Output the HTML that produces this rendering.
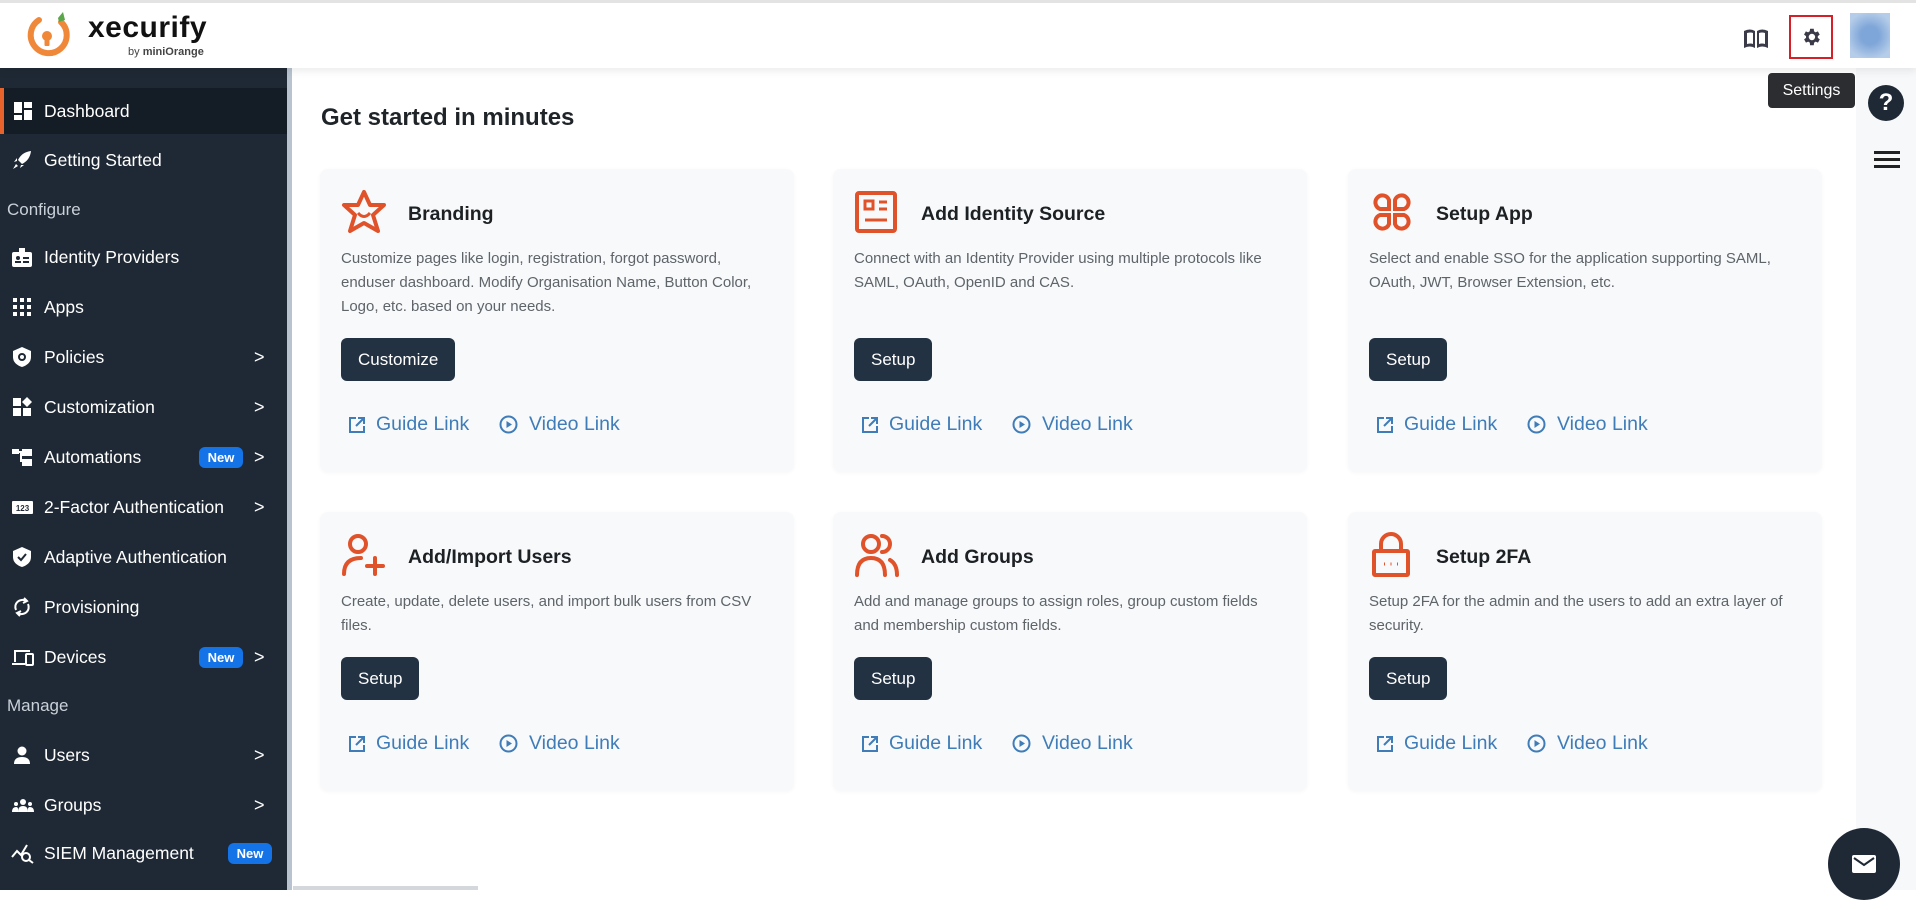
<!DOCTYPE html>
<html><head><meta charset="utf-8"><style>
*{box-sizing:border-box;margin:0;padding:0}
body{width:1916px;height:890px;overflow:hidden;background:#fff;font-family:"Liberation Sans",sans-serif;position:relative}
.top{position:absolute;left:0;top:0;width:1916px;height:68px;background:#fff;border-top:3px solid #e3e3e3;box-shadow:0 3px 8px rgba(0,0,0,.08);z-index:2}
.side{position:absolute;left:0;top:68px;width:287px;height:822px;background:#1f2935;color:#fff}
.stripe{position:absolute;left:287px;top:68px;width:5px;height:822px;background:#b8c3cf}
.item{position:absolute;left:0;width:287px;height:50px;display:flex;align-items:center;font-size:17.5px;color:#fff}
.item .ic{position:absolute;left:11px;width:22px;height:22px}
.item .t{position:absolute;left:44px}
.item .chev{position:absolute;left:254px;font-size:18px}
.sec{position:absolute;left:7px;font-size:17px;color:#c9d0d8}
.new{position:absolute;left:199px;width:44px;height:21px;background:#1473e6;border-radius:6px;font-size:13px;font-weight:bold;display:flex;align-items:center;justify-content:center}
.rail{position:absolute;left:1856px;top:68px;width:60px;height:822px;background:#f6f8fa}
h1{position:absolute;left:321px;top:104px;font-size:24px;font-weight:bold;color:#1f2428}
.card{position:absolute;width:474px;background:#f7f9fb;border-radius:8px;box-shadow:0 1px 4px rgba(0,0,0,.04)}
.card .ico{position:absolute;left:21px;top:20px;width:46px;height:46px}
.card .ti{position:absolute;left:88px;top:34px;font-size:19.5px;font-weight:bold;color:#1e2124}
.card .d{position:absolute;left:21px;top:78px;width:418px;font-size:15px;line-height:24px;color:#5f6469}
.btn{position:absolute;left:21px;height:43px;background:#233242;color:#fff;border-radius:6px;font-size:17px;display:flex;align-items:center;padding:0 17px}
.lk{position:absolute;font-size:19.5px;color:#3f7cb8;display:flex;align-items:center}
</style></head><body>
<div class="top">
 <svg style="position:absolute;left:25px;top:9px" width="48" height="48" viewBox="0 0 48 48"><path d="M36 10 A18 18 0 1 1 14 8" fill="none" stroke="#f0883a" stroke-width="6" stroke-linecap="round"/><circle cx="22" cy="24" r="5" fill="#f0883a"/><rect x="19.5" y="25" width="5" height="9" rx="1" fill="#f0883a"/><path d="M33 6 L38 0 L40 8 L34 10Z" fill="#5aa64a"/></svg>
 <div style="position:absolute;left:88px;top:8px;font-size:30px;font-weight:bold;color:#111;letter-spacing:.5px">xecurify</div>
 <div style="position:absolute;left:128px;top:43px;font-size:11px;color:#444">by <b>miniOrange</b></div>
 <svg style="position:absolute;left:1743px;top:25px" width="26" height="22" viewBox="0 0 26 22"><path d="M1 3 Q7 0 12 3 V20 Q7 17 1 20Z M14 3 Q19 0 25 3 V20 Q19 17 14 20Z" fill="#3a3a48"/><path d="M4 5 Q8 4 10 5 V16 Q8 15 4 16Z M16 5 Q19 4 22 5 V16 Q19 15 16 16Z" fill="#fff"/></svg>
 <div style="position:absolute;left:1789px;top:12px;width:44px;height:44px;border:2px solid #d61f26"></div>
 <svg style="position:absolute;left:1800px;top:23px" width="22" height="22" viewBox="0 0 24 24"><path fill="#3a3a48" d="M19.4 13a7.5 7.5 0 0 0 0-2l2.1-1.6-2-3.5-2.5 1a7 7 0 0 0-1.7-1L15 3h-4l-.4 2.9a7 7 0 0 0-1.7 1l-2.5-1-2 3.5L6.6 11a7.5 7.5 0 0 0 0 2l-2.1 1.6 2 3.5 2.5-1a7 7 0 0 0 1.7 1L11 21h4l.4-2.9a7 7 0 0 0 1.7-1l2.5 1 2-3.5zM13 15.5a3.5 3.5 0 1 1 0-7 3.5 3.5 0 0 1 0 7z"/></svg>
 <div style="position:absolute;left:1850px;top:10px;width:40px;height:45px;background:radial-gradient(circle,#7fa6d8 30%,#b6cde9 80%)"></div>
</div>
<div style="position:absolute;left:1768px;top:73px;width:87px;height:35px;background:#2b2d31;border-radius:4px;color:#fff;font-size:16px;display:flex;align-items:center;justify-content:center;z-index:3">Settings</div>
<div style="position:absolute;left:1804px;top:66px;width:0;height:0;border:7px solid transparent;border-bottom-color:#2b2d31;z-index:3"></div>
<div class="rail"></div>
<div style="position:absolute;left:1868px;top:85px;width:36px;height:36px;border-radius:50%;background:#1f2935;color:#fff;font-weight:bold;font-size:24px;display:flex;align-items:center;justify-content:center">?</div>
<div style="position:absolute;left:1874px;top:151px;width:26px;height:3px;background:#222;box-shadow:0 7px 0 #222,0 14px 0 #222"></div>
<div style="position:absolute;left:1828px;top:828px;width:72px;height:72px;border-radius:50%;background:#1f2935"></div>
<svg style="position:absolute;left:1852px;top:855px" width="24" height="18" viewBox="0 0 24 18"><rect width="24" height="18" rx="2" fill="#fff"/><path d="M2 3 L12 10 L22 3" fill="none" stroke="#1f2935" stroke-width="2"/></svg>

<div class="side">
 <div class="item" style="top:20px;height:46px;background:#141c25;border-left:4px solid #e8622c"><svg class="ic" viewBox="0 0 22 22" style="left:8px"><rect x="2" y="2" width="8" height="11" fill="#fff"/><rect x="12" y="2" width="8" height="6" fill="#fff"/><rect x="2" y="15" width="8" height="5" fill="#fff"/><rect x="12" y="10" width="8" height="10" fill="#fff"/></svg><span class="t" style="left:40px">Dashboard</span></div>
 <div class="item" style="top:67px"><svg class="ic" viewBox="0 0 22 22"><path d="M20 2 Q11 3 7 11 L11 15 Q19 11 20 2Z M6 12 L3 13 L6 9Z M10 16 L9 19 L13 16Z M5 15 L2 20 L7 17Z" fill="#fff"/></svg><span class="t">Getting Started</span></div>
 <div class="sec" style="top:132px">Configure</div>
 <div class="item" style="top:164px"><svg class="ic" viewBox="0 0 22 22"><rect x="1" y="6" width="20" height="15" rx="2" fill="#fff"/><rect x="8" y="2" width="6" height="6" fill="#fff"/><circle cx="7" cy="12" r="2" fill="#1f2935"/><rect x="4" y="15" width="6" height="2" fill="#1f2935"/><rect x="12" y="11" width="6" height="2" fill="#1f2935"/><rect x="12" y="15" width="6" height="2" fill="#1f2935"/></svg><span class="t">Identity Providers</span></div>
 <div class="item" style="top:214px"><svg class="ic" viewBox="0 0 22 22" fill="#fff"><rect x="2" y="2" width="4" height="4"/><rect x="9" y="2" width="4" height="4"/><rect x="16" y="2" width="4" height="4"/><rect x="2" y="9" width="4" height="4"/><rect x="9" y="9" width="4" height="4"/><rect x="16" y="9" width="4" height="4"/><rect x="2" y="16" width="4" height="4"/><rect x="9" y="16" width="4" height="4"/><rect x="16" y="16" width="4" height="4"/></svg><span class="t">Apps</span></div>
 <div class="item" style="top:264px"><svg class="ic" viewBox="0 0 22 22"><path d="M11 1 L20 5 V11 Q20 18 11 21 Q2 18 2 11 V5Z" fill="#fff"/><circle cx="11" cy="11" r="3" fill="none" stroke="#1f2935" stroke-width="2"/></svg><span class="t">Policies</span><span class="chev">&gt;</span></div>
 <div class="item" style="top:314px"><svg class="ic" viewBox="0 0 22 22" fill="#fff"><rect x="2" y="2" width="8" height="8"/><path d="M16 1 L21 6 L16 11 L11 6Z"/><rect x="2" y="12" width="8" height="8"/><rect x="12" y="12" width="8" height="8"/></svg><span class="t">Customization</span><span class="chev">&gt;</span></div>
 <div class="item" style="top:364px"><svg class="ic" viewBox="0 0 22 22" fill="#fff"><rect x="1" y="3" width="7" height="5"/><rect x="11" y="3" width="10" height="7"/><rect x="11" y="13" width="10" height="7"/><rect x="8" y="5" width="3" height="2"/><rect x="9" y="7" width="2" height="9"/></svg><span class="t">Automations</span><span class="new">New</span><span class="chev">&gt;</span></div>
 <div class="item" style="top:414px"><svg class="ic" viewBox="0 0 22 22"><rect x="1" y="5" width="21" height="13" rx="1" fill="#fff"/><text x="11.5" y="15" font-size="8" text-anchor="middle" fill="#1f2935" font-family="Liberation Sans" font-weight="bold">123</text></svg><span class="t">2-Factor Authentication</span><span class="chev">&gt;</span></div>
 <div class="item" style="top:464px"><svg class="ic" viewBox="0 0 22 22"><path d="M11 1 L20 5 V11 Q20 18 11 21 Q2 18 2 11 V5Z" fill="#fff"/><path d="M7 11 L10 14 L15 8" fill="none" stroke="#1f2935" stroke-width="2"/></svg><span class="t">Adaptive Authentication</span></div>
 <div class="item" style="top:514px"><svg class="ic" viewBox="0 0 22 22" fill="none" stroke="#fff" stroke-width="2"><path d="M5 14 A7 7 0 0 1 15 5 M17 8 A7 7 0 0 1 7 17"/><path d="M13 2 L16 5 L12 7 M9 20 L6 17 L10 15"/></svg><span class="t">Provisioning</span></div>
 <div class="item" style="top:564px"><svg class="ic" viewBox="0 0 24 22" style="width:24px"><path d="M3 4 H19 V6 H5 V16 H3Z M1 17 H14 V19 H1Z" fill="#fff"/><rect x="15" y="8" width="7" height="11" rx="1" fill="none" stroke="#fff" stroke-width="2"/></svg><span class="t">Devices</span><span class="new">New</span><span class="chev">&gt;</span></div>
 <div class="sec" style="top:628px">Manage</div>
 <div class="item" style="top:662px"><svg class="ic" viewBox="0 0 22 22" fill="#fff"><circle cx="11" cy="7" r="4.5"/><path d="M3 20 Q3 13 11 13 Q19 13 19 20Z"/></svg><span class="t">Users</span><span class="chev">&gt;</span></div>
 <div class="item" style="top:712px"><svg class="ic" viewBox="0 0 24 22" style="width:24px" fill="#fff"><circle cx="12" cy="8" r="3"/><circle cx="5" cy="10" r="2"/><circle cx="19" cy="10" r="2"/><path d="M7 18 Q7 12 12 12 Q17 12 17 18Z M1 18 Q1 13 5 13 Q7 13 7 15 V18Z M23 18 Q23 13 19 13 Q17 13 17 15 V18Z"/></svg><span class="t">Groups</span><span class="chev">&gt;</span></div>
 <div class="item" style="top:760px"><svg class="ic" viewBox="0 0 24 22" style="width:24px" fill="none" stroke="#fff" stroke-width="2"><path d="M1 15 L6 9 L10 13 L16 3"/><circle cx="15" cy="15" r="4"/><path d="M18 18 L22 21"/></svg><span class="t">SIEM Management</span><span class="new" style="left:228px">New</span></div>
</div>
<div class="stripe"></div>

<h1>Get started in minutes</h1>

<!-- Row 1 -->
<div class="card" style="left:320px;top:169px;height:303px">
 <svg class="ico" viewBox="0 0 46 46" fill="none" stroke="#e0532a" stroke-width="4" stroke-linejoin="round"><path d="M23 3 L29 16 L43 16 L32 26 L37 42 L23 34 L9 42 L14 26 L3 16 L17 16Z"/><path d="M17 24 Q23 31 29 24" stroke-width="3"/></svg>
 <div class="ti">Branding</div>
 <div class="d">Customize pages like login, registration, forgot password, enduser dashboard. Modify Organisation Name, Button Color, Logo, etc. based on your needs.</div>
 <div class="btn" style="top:169px">Customize</div>
 <div class="lk" style="left:28px;top:244px"><svg width="18" height="18" viewBox="0 0 18 18" fill="none" stroke="#3f7cb8" stroke-width="2"><path d="M8 2 H2 V16 H16 V10 M10 2 H16 V8 M16 2 L8 10"/></svg><span style="margin-left:10px">Guide Link</span></div>
 <div class="lk" style="left:179px;top:244px"><svg width="19" height="19" viewBox="0 0 19 19"><circle cx="9.5" cy="9.5" r="8" fill="none" stroke="#3f7cb8" stroke-width="2"/><path d="M7.5 6 L13 9.5 L7.5 13Z" fill="#3f7cb8"/></svg><span style="margin-left:11px">Video Link</span></div>
</div>
<div class="card" style="left:833px;top:169px;height:303px">
 <svg class="ico" viewBox="0 0 46 46" fill="none" stroke="#e0532a" stroke-width="4"><rect x="3" y="4" width="38" height="38" rx="2"/><rect x="11" y="12" width="8" height="8" stroke-width="3"/><path d="M25 13 H33 M25 20 H33 M11 31 H33" stroke-width="3"/></svg>
 <div class="ti">Add Identity Source</div>
 <div class="d">Connect with an Identity Provider using multiple protocols like SAML, OAuth, OpenID and CAS.</div>
 <div class="btn" style="top:169px">Setup</div>
 <div class="lk" style="left:28px;top:244px"><svg width="18" height="18" viewBox="0 0 18 18" fill="none" stroke="#3f7cb8" stroke-width="2"><path d="M8 2 H2 V16 H16 V10 M10 2 H16 V8 M16 2 L8 10"/></svg><span style="margin-left:10px">Guide Link</span></div>
 <div class="lk" style="left:179px;top:244px"><svg width="19" height="19" viewBox="0 0 19 19"><circle cx="9.5" cy="9.5" r="8" fill="none" stroke="#3f7cb8" stroke-width="2"/><path d="M7.5 6 L13 9.5 L7.5 13Z" fill="#3f7cb8"/></svg><span style="margin-left:11px">Video Link</span></div>
</div>
<div class="card" style="left:1348px;top:169px;height:303px">
 <svg class="ico" viewBox="0 0 46 46" fill="none" stroke="#e0532a" stroke-width="4"><path d="M20 20 H11 A7 7 0 1 1 20 11Z M26 20 V11 A7 7 0 1 1 35 20Z M20 26 V35 A7 7 0 1 1 11 26Z M26 26 H35 A7 7 0 1 1 26 35Z"/></svg>
 <div class="ti">Setup App</div>
 <div class="d">Select and enable SSO for the application supporting SAML, OAuth, JWT, Browser Extension, etc.</div>
 <div class="btn" style="top:169px">Setup</div>
 <div class="lk" style="left:28px;top:244px"><svg width="18" height="18" viewBox="0 0 18 18" fill="none" stroke="#3f7cb8" stroke-width="2"><path d="M8 2 H2 V16 H16 V10 M10 2 H16 V8 M16 2 L8 10"/></svg><span style="margin-left:10px">Guide Link</span></div>
 <div class="lk" style="left:179px;top:244px"><svg width="19" height="19" viewBox="0 0 19 19"><circle cx="9.5" cy="9.5" r="8" fill="none" stroke="#3f7cb8" stroke-width="2"/><path d="M7.5 6 L13 9.5 L7.5 13Z" fill="#3f7cb8"/></svg><span style="margin-left:11px">Video Link</span></div>
</div>

<!-- Row 2 -->
<div class="card" style="left:320px;top:512px;height:279px">
 <svg class="ico" viewBox="0 0 46 46" fill="none" stroke="#e0532a" stroke-width="4" stroke-linecap="round"><circle cx="17" cy="12" r="8"/><path d="M3 42 Q3 26 20 26"/><path d="M34 26 V42 M26 34 H42"/></svg>
 <div class="ti">Add/Import Users</div>
 <div class="d">Create, update, delete users, and import bulk users from CSV files.</div>
 <div class="btn" style="top:145px">Setup</div>
 <div class="lk" style="left:28px;top:220px"><svg width="18" height="18" viewBox="0 0 18 18" fill="none" stroke="#3f7cb8" stroke-width="2"><path d="M8 2 H2 V16 H16 V10 M10 2 H16 V8 M16 2 L8 10"/></svg><span style="margin-left:10px">Guide Link</span></div>
 <div class="lk" style="left:179px;top:220px"><svg width="19" height="19" viewBox="0 0 19 19"><circle cx="9.5" cy="9.5" r="8" fill="none" stroke="#3f7cb8" stroke-width="2"/><path d="M7.5 6 L13 9.5 L7.5 13Z" fill="#3f7cb8"/></svg><span style="margin-left:11px">Video Link</span></div>
</div>
<div class="card" style="left:833px;top:512px;height:279px">
 <svg class="ico" viewBox="0 0 46 46" fill="none" stroke="#e0532a" stroke-width="4" stroke-linecap="round"><circle cx="17" cy="12" r="8"/><path d="M3 43 Q3 26 17 26 Q31 26 31 43"/><path d="M28 4 A8 8 0 0 1 28 20 M36 28 Q43 32 43 43"/></svg>
 <div class="ti">Add Groups</div>
 <div class="d">Add and manage groups to assign roles, group custom fields and membership custom fields.</div>
 <div class="btn" style="top:145px">Setup</div>
 <div class="lk" style="left:28px;top:220px"><svg width="18" height="18" viewBox="0 0 18 18" fill="none" stroke="#3f7cb8" stroke-width="2"><path d="M8 2 H2 V16 H16 V10 M10 2 H16 V8 M16 2 L8 10"/></svg><span style="margin-left:10px">Guide Link</span></div>
 <div class="lk" style="left:179px;top:220px"><svg width="19" height="19" viewBox="0 0 19 19"><circle cx="9.5" cy="9.5" r="8" fill="none" stroke="#3f7cb8" stroke-width="2"/><path d="M7.5 6 L13 9.5 L7.5 13Z" fill="#3f7cb8"/></svg><span style="margin-left:11px">Video Link</span></div>
</div>
<div class="card" style="left:1348px;top:512px;height:279px">
 <svg class="ico" viewBox="0 0 46 46" fill="none" stroke="#e0532a" stroke-width="4"><rect x="5" y="19" width="34" height="24" rx="1"/><path d="M12 19 V12 A10 10 0 0 1 32 12 V19"/><path d="M15 32 H16 M21.5 32 H22.5 M28 32 H29" stroke-width="3"/></svg>
 <div class="ti">Setup 2FA</div>
 <div class="d">Setup 2FA for the admin and the users to add an extra layer of security.</div>
 <div class="btn" style="top:145px">Setup</div>
 <div class="lk" style="left:28px;top:220px"><svg width="18" height="18" viewBox="0 0 18 18" fill="none" stroke="#3f7cb8" stroke-width="2"><path d="M8 2 H2 V16 H16 V10 M10 2 H16 V8 M16 2 L8 10"/></svg><span style="margin-left:10px">Guide Link</span></div>
 <div class="lk" style="left:179px;top:220px"><svg width="19" height="19" viewBox="0 0 19 19"><circle cx="9.5" cy="9.5" r="8" fill="none" stroke="#3f7cb8" stroke-width="2"/><path d="M7.5 6 L13 9.5 L7.5 13Z" fill="#3f7cb8"/></svg><span style="margin-left:11px">Video Link</span></div>
</div>
<div style="position:absolute;left:293px;top:886px;width:185px;height:4px;background:#d4d8dc"></div>
</body></html>
